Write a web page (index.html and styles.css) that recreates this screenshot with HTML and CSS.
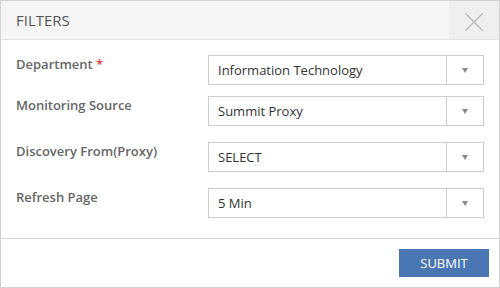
FILE: index.html
```html
<!DOCTYPE html>
<html lang="en">

<head>
    <meta charset="UTF-8">
    <meta name="viewport" content="width=device-width, initial-scale=1.0">
    <title>Filters</title>
    <link rel="stylesheet" href="styles.css">
</head>

<body>

    <div class="modal">
        <div class="modal-header">
            <h3>FILTERS</h3>
            <button class="close" aria-label="Close">
                <svg width="20" height="20" viewBox="0 0 20 20">
                    <path d="M1.5 1.5 L18.5 18.5 M18.5 1.5 L1.5 18.5" stroke="#b8b8b8" stroke-width="1.2" fill="none"/>
                </svg>
            </button>
        </div>

        <form class="modal-body">
            <div class="row first">
                <label>Department <span class="req">*</span></label>
                <div class="select">
                    <span class="value">Information Technology</span>
                    <span class="arrow"></span>
                </div>
            </div>
            <div class="row tight">
                <label>Monitoring Source</label>
                <div class="select">
                    <span class="value">Summit Proxy</span>
                    <span class="arrow"></span>
                </div>
            </div>
            <div class="row">
                <label>Discovery From(Proxy)</label>
                <div class="select">
                    <span class="value">SELECT</span>
                    <span class="arrow"></span>
                </div>
            </div>
            <div class="row">
                <label>Refresh Page</label>
                <div class="select">
                    <span class="value">5 Min</span>
                    <span class="arrow"></span>
                </div>
            </div>
        </form>

        <div class="modal-footer">
            <button class="submit">SUBMIT</button>
        </div>
    </div>

</body>

</html>
```

FILE: styles.css
```css
* {
    box-sizing: border-box;
}

body {
    margin: 0;
    font-family: 'Open Sans', sans-serif;
    background: #fff;
}

.modal {
    width: 500px;
    height: 288px;
    border: 1px solid #d2d2d2;
    display: flex;
    flex-direction: column;
}

.modal-header {
    height: 39px;
    display: flex;
    align-items: stretch;
    justify-content: space-between;
    background-color: #f5f5f5;
    border-bottom: 1px solid #e4e4e4;
}

.modal-header h3 {
    margin: 0;
    padding-left: 15px;
    font-size: 15px;
    font-weight: 400;
    color: #555;
    line-height: 38px;
}

.close {
    width: 50px;
    border: none;
    background-color: #efefef;
    padding: 4px 0 0 0;
    display: flex;
    justify-content: center;
    align-items: center;
    cursor: pointer;
}

.modal-body {
    flex: 1;
    padding: 15px 15px 0 15px;
}

.row {
    display: flex;
    align-items: flex-start;
    margin-top: 16px;
}

.row.first {
    margin-top: 0;
}

.row.tight {
    margin-top: 11px;
}

.row label {
    width: 192px;
    font-size: 13px;
    font-weight: 600;
    color: #666;
    line-height: 18px;
}

.req {
    color: #e5403a;
}

.select {
    width: 276px;
    height: 30px;
    border: 1px solid #cccccc;
    display: flex;
    align-items: stretch;
}

.select .value {
    flex: 1;
    padding-left: 9px;
    font-size: 13px;
    color: #333;
    line-height: 28px;
}

.select .arrow {
    width: 37px;
    border-left: 1px solid #cccccc;
    display: flex;
    justify-content: center;
    align-items: center;
}

.select .arrow::after {
    content: "";
    border-left: 3px solid transparent;
    border-right: 3px solid transparent;
    border-top: 5px solid #888;
}

.modal-footer {
    border-top: 1px solid #d6d6d6;
    padding: 10px;
    display: flex;
    justify-content: flex-end;
}

.submit {
    width: 90px;
    height: 28px;
    border: none;
    background-color: #4a77b4;
    color: #fff;
    font-family: 'Open Sans', sans-serif;
    font-size: 13px;
    cursor: pointer;
}
```
